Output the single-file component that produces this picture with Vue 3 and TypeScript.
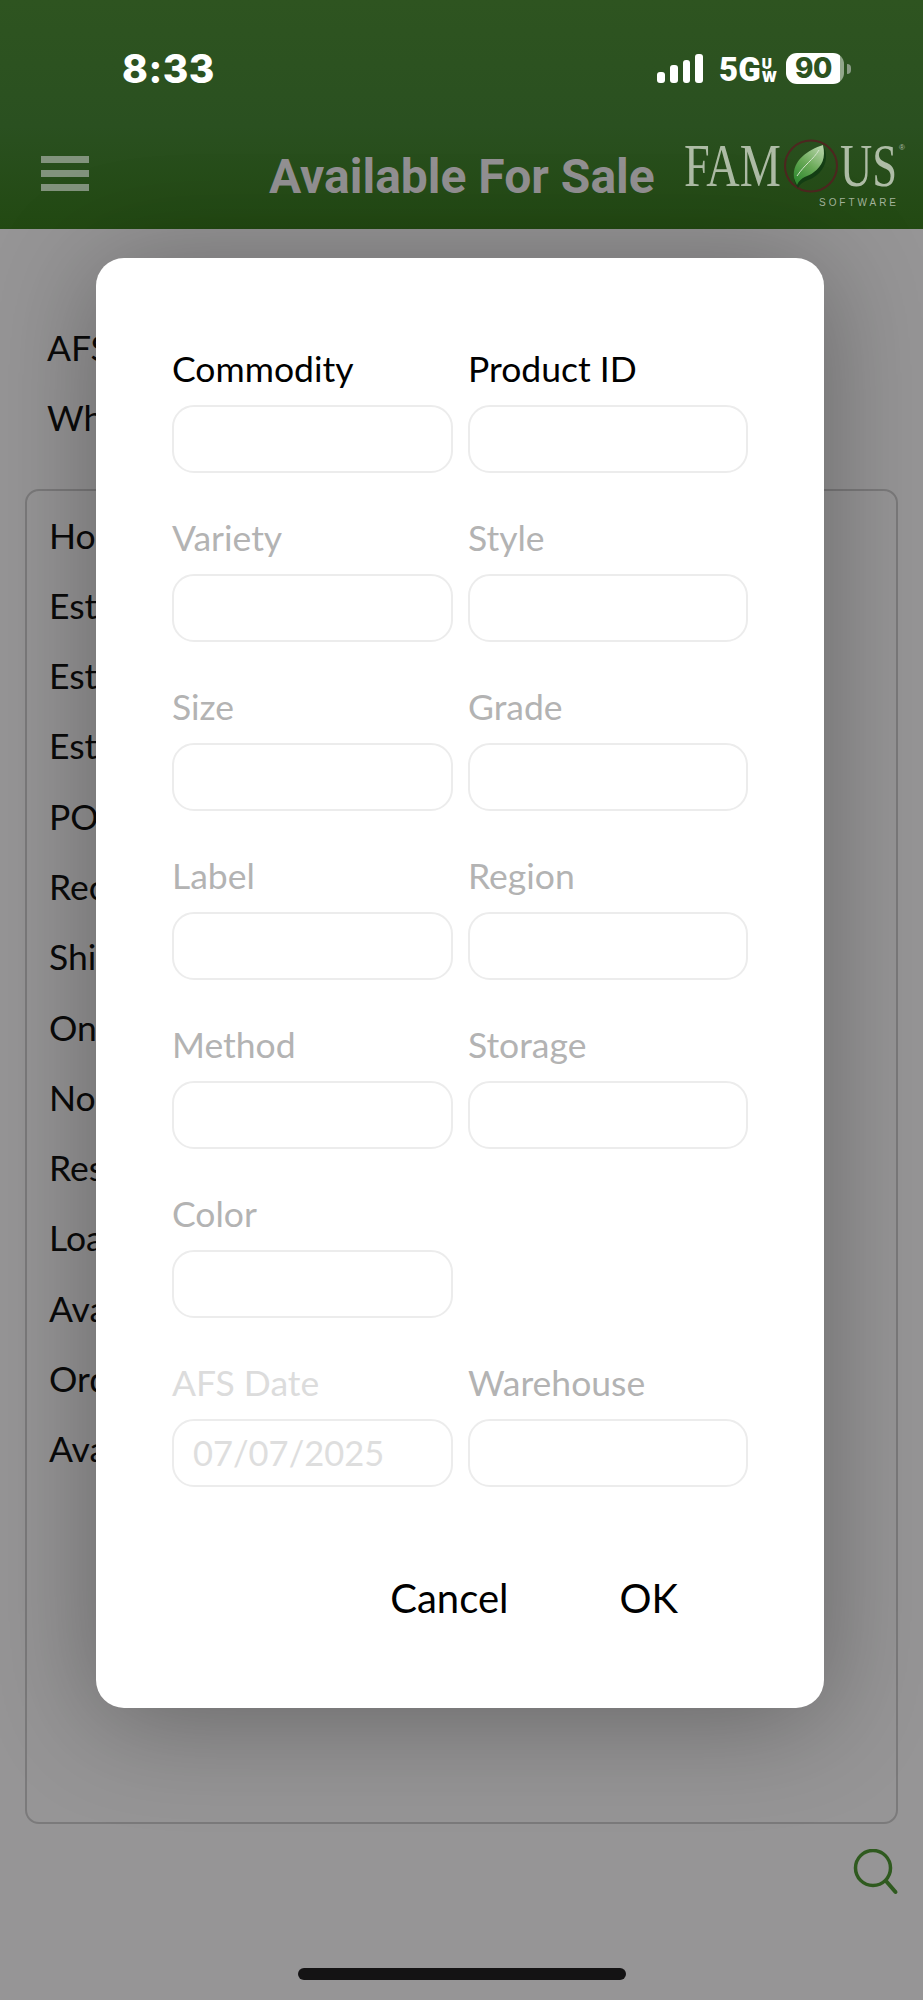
<script setup lang="ts">
interface Field {
  label: string
  tone: 'active' | 'muted' | 'faint'
  value?: string
  empty?: boolean
}

const fields: Field[] = [
  { label: 'Commodity', tone: 'active' },
  { label: 'Product ID', tone: 'active' },
  { label: 'Variety', tone: 'muted' },
  { label: 'Style', tone: 'muted' },
  { label: 'Size', tone: 'muted' },
  { label: 'Grade', tone: 'muted' },
  { label: 'Label', tone: 'muted' },
  { label: 'Region', tone: 'muted' },
  { label: 'Method', tone: 'muted' },
  { label: 'Storage', tone: 'muted' },
  { label: 'Color', tone: 'muted' },
  { label: '', tone: 'muted', empty: true },
  { label: 'AFS Date', tone: 'faint', value: '07/07/2025' },
  { label: 'Warehouse', tone: 'muted' }
]

const summary: string[] = ['AFS', 'Wh']
const rows: string[] = ['Ho', 'Est', 'Est', 'Est', 'PO', 'Rec', 'Shi', 'On', 'No', 'Res', 'Loa', 'Ava', 'Ord', 'Ava']
</script>

<template>
  <div class="screen">
    <header class="header">
      <div class="status">
        <span class="time">8:33</span>
        <div class="status-right">
          <div class="signal">
            <i class="b1"></i><i class="b2"></i><i class="b3"></i><i class="b4"></i>
          </div>
          <div class="net">
            <span class="net-main">5G</span>
            <span class="net-sub"><b>U</b><b>W</b></span>
          </div>
          <div class="battery">
            <div class="battery-body"><span>90</span></div>
            <i class="battery-nub"></i>
          </div>
        </div>
      </div>
      <div class="nav">
        <div class="burger"><i></i><i></i><i></i></div>
        <h1 class="title">Available For Sale</h1>
        <svg class="logo" viewBox="680 120 243 95" width="243" height="95" aria-label="Famous Software">
          <defs>
            <linearGradient id="leafFill" x1="0.8" y1="0" x2="0.2" y2="1">
              <stop offset="0" stop-color="#b4d2a6" />
              <stop offset="0.5" stop-color="#6aaa58" />
              <stop offset="1" stop-color="#2f8a30" />
            </linearGradient>
          </defs>
          <text transform="translate(684 185.500) scale(0.746 1)" class="logo-word">FAM</text>
          <text transform="translate(840 185.500) scale(0.72 1)" class="logo-word">US</text>
          <text x="899" y="150" class="logo-reg">®</text>
          <ellipse cx="811" cy="166" rx="26" ry="25.500" fill="none" stroke="#4e2620" stroke-width="2" />
          <path d="M823 145C808 150 793 160 794 178C794 182 796 185 798 188C800 184 803 182 808 180C820 176 827 165 826 155C825.500 151 824.500 148 823 145Z" fill="#143e14" />
          <path d="M823 145C808 150 792 160 794 178C795 181 796 183 797 185C801 176 808 177 814 172C822 166 826 158 823 145Z" fill="url(#leafFill)" />
          <path d="M819 150C813 160 805 164 797 176" fill="none" stroke="#d3e4cc" stroke-width="1" />
          <text x="819" y="206" class="logo-sub" textLength="77">SOFTWARE</text>
        </svg>
      </div>
    </header>

    <main class="content">
      <div class="summary">
        <div v-for="(t, i) in summary" :key="i" class="line">{{ t }}</div>
      </div>
      <section class="panel">
        <div v-for="(t, i) in rows" :key="i" class="line">{{ t }}</div>
      </section>
      <div class="actions">
        <svg class="search" viewBox="0 0 46 46" width="46" height="46" aria-label="Search">
          <circle cx="20" cy="19" r="17.500" fill="none" stroke="#2f5a1f" stroke-width="3.500" />
          <path d="M33 32L42.500 43" fill="none" stroke="#2f5a1f" stroke-width="4" stroke-linecap="round" />
        </svg>
      </div>
      <div class="home-wrap"><div class="home"></div></div>
    </main>

    <div class="modal">
      <div class="grid">
        <div v-for="(f, i) in fields" :key="i" class="field" :class="f.tone">
          <template v-if="!f.empty">
            <label class="label">{{ f.label }}</label>
            <div class="input">{{ f.value }}</div>
          </template>
        </div>
      </div>
      <div class="buttons">
        <button class="btn">Cancel</button>
        <button class="btn">OK</button>
      </div>
    </div>
  </div>
</template>

<style>
html,
body {
  margin: 0;
  background: #969596;
}
</style>

<style scoped>
.screen {
  position: relative;
  width: 923px;
  height: 2000px;
  overflow: hidden;
  background: #969596;
  font-family: Lato, "Liberation Sans", sans-serif;
  color: #0a0a0a;
  display: flex;
  flex-direction: column;
}

/* Header */
.header {
  height: 229px;
  box-sizing: border-box;
  background: linear-gradient(180deg, #2e5420 0%, #2a5020 55%, #224912 100%);
  flex: none;
}
.status {
  height: 82px;
  box-sizing: border-box;
  padding: 53px 72px 0 122px;
  display: flex;
  justify-content: space-between;
  align-items: flex-start;
  color: #fff;
}
.time {
  font-family: Inter, sans-serif;
  font-weight: 800;
  font-size: 39px;
  line-height: 31px;
  letter-spacing: 0.5px;
}
.status-right {
  display: flex;
  align-items: flex-start;
}
.signal {
  display: flex;
  align-items: flex-end;
  gap: 5px;
  height: 29px;
  margin-top: 1px;
  width: 46px;
  margin-right: 16px;
}
.signal i {
  display: block;
  width: 8px;
  background: #fff;
  border-radius: 3px;
}
.signal .b1 { height: 11px; }
.signal .b2 { height: 18px; }
.signal .b3 { height: 23px; }
.signal .b4 { height: 29px; }
.net {
  display: flex;
  width: 52px;
  margin-right: 15px;
  margin-top: 4px;
}
.net-main {
  font-family: Roboto, sans-serif;
  font-weight: 900;
  font-size: 33px;
  line-height: 25px;
}
.net-sub {
  display: flex;
  flex-direction: column;
  margin-left: 1px;
  font-family: Inter, sans-serif;
  font-weight: 800;
  font-size: 14px;
  line-height: 13px;
}
.battery {
  display: flex;
  align-items: center;
  height: 31px;
}
.battery-body {
  width: 58px;
  height: 31px;
  box-sizing: border-box;
  border-radius: 11px;
  background: linear-gradient(90deg, #fff 0, #fff 93%, #93a78c 93%);
  display: flex;
  align-items: center;
  justify-content: center;
  padding-right: 3px;
}
.battery-body span {
  font-family: Inter, sans-serif;
  font-weight: 800;
  font-size: 28px;
  line-height: 27px;
  letter-spacing: -0.5px;
  color: #2d5320;
}
.battery-nub {
  display: block;
  width: 4px;
  height: 10px;
  margin-left: 3px;
  background: #8a9b85;
  border-radius: 0 4px 4px 0;
}
.nav {
  height: 147px;
  position: relative;
  display: flex;
  align-items: flex-start;
}
.burger {
  width: 48px;
  margin: 74px 0 0 41px;
  display: flex;
  flex-direction: column;
  gap: 7px;
}
.burger i {
  display: block;
  height: 7px;
  background: #82937d;
}
.title {
  margin: 67px 0 0 180px;
  font-family: Roboto, sans-serif;
  font-weight: 700;
  font-size: 48px;
  line-height: 56px;
  color: #929092;
  white-space: nowrap;
}
.logo {
  position: absolute;
  left: 680px;
  top: 38px;
}
.logo-word {
  font-family: "Liberation Serif", serif;
  font-size: 62px;
  fill: #aebca6;
}
.logo-reg {
  font-family: "Liberation Sans", sans-serif;
  font-size: 8px;
  fill: #aebca6;
}
.logo-sub {
  font-family: "Liberation Sans", sans-serif;
  font-size: 10px;
  fill: #a3b39b;
}

/* Background content */
.content {
  flex: 1;
  display: flex;
  flex-direction: column;
  min-height: 0;
}
.summary {
  padding: 84px 0 0 47px;
  height: 260px;
  box-sizing: border-box;
}
.line {
  font-size: 35.5px;
  line-height: 70.3px;
  height: 70.3px;
}
.panel {
  margin: 0 25px 0 25px;
  height: 1335px;
  box-sizing: border-box;
  border: 2px solid rgba(0, 0, 0, 0.18);
  border-radius: 14px;
  padding: 9.5px 0 0 22px;
}
.actions {
  display: flex;
  justify-content: flex-end;
  padding: 25px 24px 0 0;
}
.home-wrap {
  display: flex;
  justify-content: center;
  margin-top: 73px;
}
.home {
  width: 328px;
  height: 12px;
  border-radius: 6px;
  background: #141314;
}

/* Modal */
.modal {
  position: absolute;
  left: 96px;
  top: 258px;
  width: 728px;
  height: 1450px;
  box-sizing: border-box;
  padding: 89px 76px 0 76px;
  background: #fff;
  border-radius: 28px;
  box-shadow: 0 10px 110px rgba(0, 0, 0, 0.32);
}
.grid {
  display: grid;
  grid-template-columns: 281px 280px;
  column-gap: 15px;
  row-gap: 35px;
}
.field {
  height: 134px;
  display: flex;
  flex-direction: column;
}
.label {
  font-size: 35.5px;
  line-height: 44px;
  height: 58px;
  flex: none;
  white-space: nowrap;
}
.input {
  height: 68px;
  flex: none;
  box-sizing: border-box;
  border: 2px solid #ececec;
  border-radius: 22px;
  padding: 0 19px;
  font-size: 34.5px;
  line-height: 64px;
  color: #dedede;
}
.active .label { color: #000; }
.muted .label { color: #b3b3b3; }
.faint .label { color: #dcdcdc; }
.buttons {
  display: flex;
  justify-content: flex-end;
  align-items: center;
  gap: 111px;
  margin-top: 80px;
  padding-right: 70px;
}
.btn {
  border: 0;
  padding: 0;
  background: transparent;
  font-family: Lato, "Liberation Sans", sans-serif;
  font-size: 40px;
  line-height: 46px;
  color: #000;
}
</style>
